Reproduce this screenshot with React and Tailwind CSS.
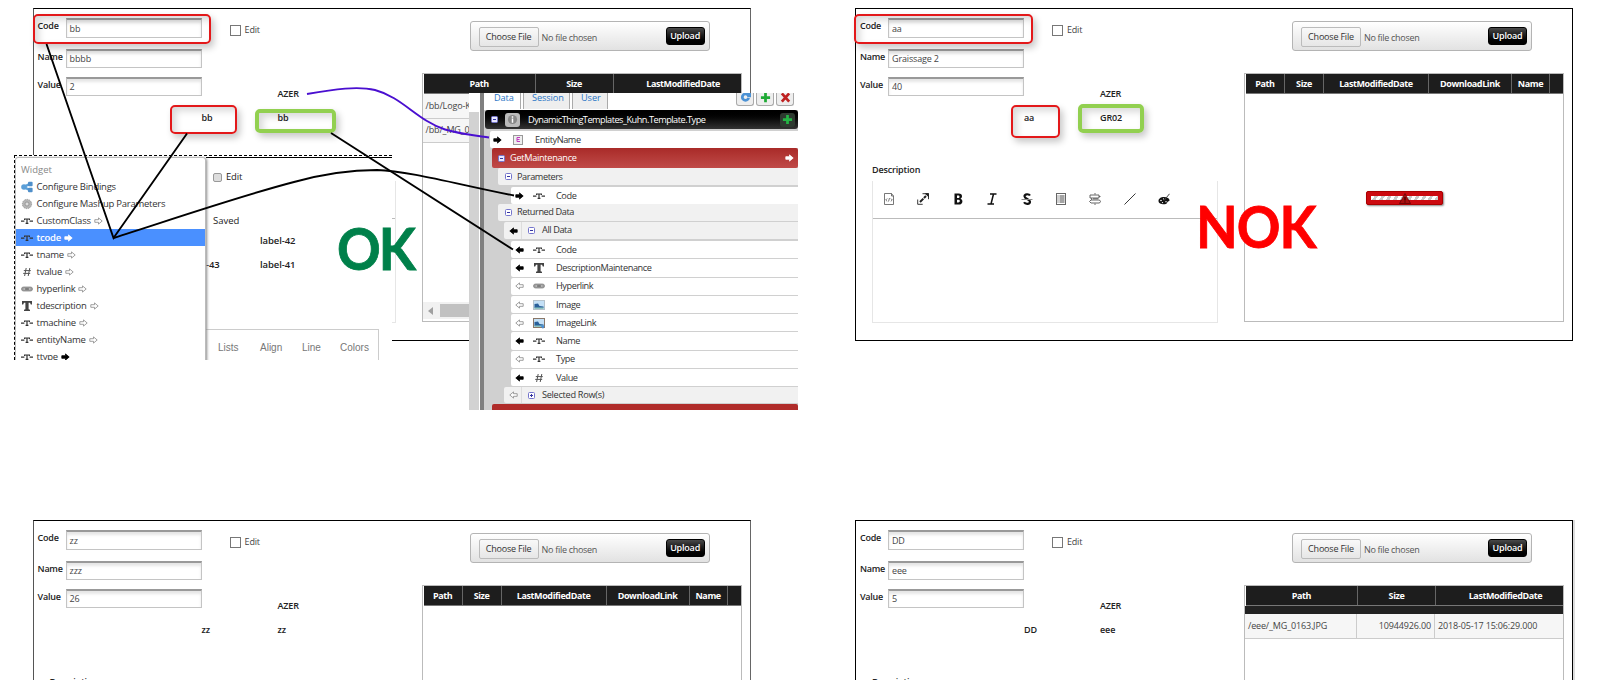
import React from 'react';

const panels = [
  {
    id: 'bb',
    code: 'bb', name: 'bbbb', value: '2', label1: 'bb', label2: 'bb',
    side: 'border-l-[#555] border-r-[#666]',
    columns: [
      { title: 'Path', width: 'w-[112px]' },
      { title: 'Size', width: 'w-[78px]' },
      { title: 'LastModifiedDate', width: 'w-[140px]' },
    ],
    rows: [['/bb/Logo-K'], ['/bb/_MG_0']],
    scrollbar: true,
  },
  {
    id: 'aa',
    code: 'aa', name: 'Graissage 2', value: '40', label1: 'aa', label2: 'GR02',
    side: 'border-l-black border-r-black',
    columns: [
      { title: 'Path', width: 'w-[39px]' },
      { title: 'Size', width: 'w-[39px]' },
      { title: 'LastModifiedDate', width: 'w-[105px]' },
      { title: 'DownloadLink', width: 'w-[83px]' },
      { title: 'Name', width: 'w-[38px]' },
    ],
    rows: [],
    loading: true,
  },
  {
    id: 'zz',
    code: 'zz', name: 'zzz', value: '26', label1: 'zz', label2: 'zz',
    side: 'border-l-[#555] border-r-[#666]',
    columns: [
      { title: 'Path', width: 'w-[39px]' },
      { title: 'Size', width: 'w-[39px]' },
      { title: 'LastModifiedDate', width: 'w-[105px]' },
      { title: 'DownloadLink', width: 'w-[83px]' },
      { title: 'Name', width: 'w-[38px]' },
    ],
    rows: [],
  },
  {
    id: 'DD',
    code: 'DD', name: 'eee', value: '5', label1: 'DD', label2: 'eee',
    side: 'border-l-black border-r-black shadow-[2px_0_0_#dcdcdc]',
    columns: [
      { title: 'Path', width: 'w-[112px]' },
      { title: 'Size', width: 'w-[78px]' },
      { title: 'LastModifiedDate', width: 'w-[140px]' },
    ],
    rows: [['/eee/_MG_0163.JPG', '10944926.00', '2018-05-17 15:06:29.000']],
    band: true,
  },
];

const menuItems = [
  { icon: 'share', text: 'Configure Bindings' },
  { icon: 'gear', text: 'Configure Mashup Parameters' },
  { icon: 'string', text: 'CustomClass', arrow: 'hollow' },
  { icon: 'string', text: 'tcode', arrow: 'white', selected: true },
  { icon: 'string', text: 'tname', arrow: 'hollow' },
  { icon: 'number', text: 'tvalue', arrow: 'hollow' },
  { icon: 'link', text: 'hyperlink', arrow: 'hollow' },
  { icon: 'text', text: 'tdescription', arrow: 'hollow' },
  { icon: 'string', text: 'tmachine', arrow: 'hollow' },
  { icon: 'string', text: 'entityName', arrow: 'hollow' },
  { icon: 'string', text: 'ttype', arrow: 'solid' },
];

const returnedFields = [
  { icon: 'string', text: 'Code', arrow: 'solid' },
  { icon: 'text', text: 'DescriptionMaintenance', arrow: 'solid' },
  { icon: 'link', text: 'Hyperlink', arrow: 'hollow' },
  { icon: 'image', text: 'Image', arrow: 'hollow' },
  { icon: 'imagelink', text: 'ImageLink', arrow: 'hollow' },
  { icon: 'string', text: 'Name', arrow: 'solid' },
  { icon: 'string', text: 'Type', arrow: 'hollow' },
  { icon: 'number', text: 'Value', arrow: 'solid' },
];

const Arrow = ({ kind, left }) => {
  const fill = { solid: '#000', white: '#fff', hollow: '#fff' }[kind];
  const stroke = kind === 'hollow' ? '#888' : fill;
  return (
    <svg viewBox="0 0 9 8" className={left ? 'w-[9px] h-[8px] shrink-0 -scale-x-100' : 'w-[9px] h-[8px] shrink-0'}>
      <path d="M.8 2.7h3.7V.9L8.2 4 4.5 7.1V5.3H.8z" fill={fill} stroke={stroke} strokeWidth=".8" />
    </svg>
  );
};

const TypeIcon = ({ name }) => (
  <svg viewBox="0 0 12 12" className="w-[12px] h-[12px] shrink-0" fill="none" stroke="#333">
    {name === 'string' && (
      <>
        <path d="M0 6.2h3.4M8.6 6.2H12" strokeWidth="1.2" />
        <path d="M3.6 5V4h4.8v1M6 4v4.4M4.6 8.4h2.8" strokeWidth="1.2" />
      </>
    )}
    {name === 'number' && <path d="M5.2 2 3.6 10M8.8 2 7.2 10M2.8 4.6h7M2.2 7.4h7" stroke="#555" />}
    {name === 'text' && <path d="M1 1h10v3.4H9.8L9 2.8H7.6v6.4l1.4.6V11H3V9.8l1.4-.6V2.8H3l-.8 1.6H1z" fill="#444" stroke="none" />}
    {name === 'link' && (
      <>
        <rect x=".5" y="4" width="11" height="4" rx="2" fill="#999" stroke="#8a8a8a" strokeWidth=".8" />
        <path d="M2.5 6h2M7.500 6h2" stroke="#ddd" strokeWidth=".8" />
        <path d="M4 6h4" stroke="#555" strokeWidth=".8" />
      </>
    )}
    {(name === 'image' || name === 'imagelink') && (
      <>
        <rect x=".5" y="1.5" width="11" height="9" fill="#c4e0f6" stroke={name === 'image' ? '#b4c2cc' : '#8a7768'} />
        <path d="M1.5 9V5l3.500-.5L6.500 7l4 .5V9z" fill="#28609a" stroke="none" />
        <path d="M1.5 8.5h9V10h-9z" fill="#8fc4c0" stroke="none" />
        {name === 'imagelink' && <path d="M7.500 8.5h4l-1.500 3.500z" fill="#4a90d9" stroke="none" />}
      </>
    )}
    {name === 'share' && (
      <>
        <path d="M2.5 6 9 2.8M2.5 6 9 9.2" stroke="#5b9fd8" strokeWidth="2.4" />
        <circle cx="3" cy="6" r="2.8" fill="#5b9fd8" stroke="none" />
        <rect x="7" y=".8" width="4.600" height="4.400" rx="1" fill="#4f8fca" stroke="none" />
        <rect x="7" y="6.8" width="4.600" height="4.400" rx="1" fill="#4f8fca" stroke="none" />
      </>
    )}
    {name === 'gear' && (
      <>
        <circle cx="6" cy="6" r="4.600" fill="#b5b5b5" stroke="#9a9a9a" strokeDasharray="1.500 .8" />
        <circle cx="6" cy="6" r="2" fill="#ddd" stroke="#888" strokeWidth=".7" />
      </>
    )}
  </svg>
);

const Toggle = ({ plus, light }) => (
  <svg viewBox="0 0 7 7" className="w-[7px] h-[7px] shrink-0">
    <rect x=".5" y=".5" width="6" height="6" rx="1" fill={light ? '#e8e8ff' : '#fff'} stroke="#7474cc" />
    <path d={plus ? 'M2 3.500h3M3.500 2v3' : 'M2 3.500h3'} stroke="#3434a0" />
  </svg>
);

const toolbarIcons = [
  <g key="html" stroke="#555" strokeWidth=".8"><path d="M1.500.5h7l2 2.500v8.500h-9zM8.500.5V3h2" /><path d="M4.200 5.500 2.700 7l1.500 1.300M7.800 5.500 9.300 7 7.800 8.300M6.500 5l-1 3.500" /></g>,
  <g key="full" stroke="#222"><path d="M3 9l6-6" strokeWidth="2" strokeDasharray="4.800 .8" /><path d="M5.500.700h6v5.500M.700 6.500v4.800h5" strokeWidth=".9" /><path d="M8.500.700h3v3z" fill="#222" /></g>,
  <path key="bold" fillRule="evenodd" d="M2.500.500h4.200c2.200 0 3.300 1 3.300 2.800 0 1.200-.6 2-1.500 2.400 1.200.4 1.900 1.300 1.900 2.700 0 2-1.400 3.100-3.700 3.100H2.500zM5 2.500V5h1.200c.9 0 1.300-.4 1.300-1.200 0-.9-.4-1.300-1.300-1.300zM5 6.800v2.700h1.300c1 0 1.500-.5 1.500-1.400s-.5-1.300-1.500-1.300z" fill="#111" />,
  <path key="italic" d="M4 1h6.500M1.500 11H8M7.500 1 5 11" stroke="#111" strokeWidth="1.500" />,
  <g key="strike" stroke="#111"><path d="M9 2.500C8 .8 3.500.7 3.500 3.300S9 6 9 8.700s-4.600 2.800-6 .5" strokeWidth="2.200" /><path d="M.500 6.500h11" stroke="#888" /></g>,
  <g key="lists" stroke="#333"><rect x="1.500" y=".500" width="9" height="11" stroke="#666" /><path d="M4.500 3h5M4.500 5h5M4.500 7h5M4.500 9h5M2.500 3h1M2.500 5h1M2.500 7h1M2.500 9h1" strokeWidth=".900" /></g>,
  <g key="align" stroke="#555" strokeWidth=".900"><path d="M6 0v1.500M6 10.500V12M1 2h9v3H1zM2.500 5.200v1.600M10 3.500h1.500M2 7h8.500l1 1.500-1 1.500H2L.500 8.500zM4 5.800h5" /></g>,
  <path key="line" d="M.500 11.500l11-11" stroke="#222" strokeWidth=".900" />,
  <g key="colors"><path d="M.500 8c0-2.500 2.500-4 5.500-4 3.300 0 5.500 1.500 5.500 3.300 0 1.400-1.500 1-2 1.700s-.500 2.300-3.500 2.300S.500 10.300.500 8z" fill="#111" /><path d="M6 7.500l5.500-6.700" stroke="#444" /><circle cx="3" cy="7.500" r=".800" fill="#fff" /><circle cx="5.500" cy="5.800" r=".600" fill="#fff" /><circle cx="4.500" cy="9.600" r=".700" fill="#fff" /><circle cx="8" cy="8.800" r=".700" fill="#fff" /></g>,
];

const Field = ({ label, value, className }) => (
  <div className={`flex ${className}`}>
    <span className="w-[28px] shrink-0 font-semibold tracking-[-0.25px] leading-[15px] whitespace-nowrap">{label}</span>
    <div className="w-[136px] border border-[#c4c4c4] border-t-2 border-t-[#999] pl-[3px] flex items-center text-[#444] tracking-[-0.15px] shadow-[inset_0_3px_3px_#e6e6e6]">
      {value}
    </div>
  </div>
);

const UploadBar = () => (
  <div className="ml-[48px] mt-[12px] w-[240px] h-[30px] rounded-[3px] border border-[#b4b4b4] bg-linear-to-b from-white to-[#e2e2e2] flex pl-[8px] pr-[4px] pt-[5px]">
    <div className="w-[60px] h-[20px] rounded-[2px] border border-[#bbb] flex items-center justify-center text-[#333] tracking-[-0.2px] whitespace-nowrap">Choose File</div>
    <div className="ml-[3px] h-[21px] flex items-center text-[#555] tracking-[-0.3px] whitespace-nowrap">No file chosen</div>
    <div className="ml-auto w-[39px] h-[18px] rounded-[3px] border border-black bg-linear-to-b from-[#4a4a4a] to-black flex items-center justify-center text-white font-semibold tracking-[-0.2px]">Upload</div>
  </div>
);

const FileTable = ({ panel }) => (
  <div className="mt-[22px] w-[320px] h-[249px] border border-[#bbb] flex flex-col overflow-hidden">
    <div className="ml-px h-[20px] shrink-0 bg-[#1d1d1d] flex border-b border-[#777]">
      {panel.columns.map((col) => (
        <div key={col.title} className={`${col.width} shrink-0 border-r border-[#666] flex items-center justify-center text-white font-bold tracking-[-0.4px]`}>
          {col.title}
        </div>
      ))}
    </div>
    {panel.band && <div className="h-[8px] shrink-0 bg-[#222]" />}
    {panel.rows.map((row) => (
      <div key={row[0]} className="h-[24.500px] shrink-0 flex bg-[#f6f6f6] border-b border-[#ccc] text-[#444]">
        {panel.columns.map((col, i) => (
          <div key={col.title} className={`${col.width} shrink-0 border-r border-[#ccc] px-[3px] flex items-center whitespace-nowrap tracking-[-0.150px] ${i === 1 ? 'justify-end' : ''}`}>
            {row[i]}
          </div>
        ))}
      </div>
    ))}
    {panel.loading && (
      <div className="mt-[97px] ml-[121px] relative w-[77px] h-[14px] rounded-[2px] bg-[#cc0a10] border border-[#a00] shadow-[1px_1px_2px_#888] p-[4px]">
        <div className="h-[4px] bg-[repeating-linear-gradient(120deg,#fff_0_3px,#c9c9c9_3px_6px)]" />
        <svg viewBox="0 0 12 11" className="absolute left-[32px] top-[1px] w-[12px] h-[11px]">
          <path d="M6 .500 11.500 10.500H.500z" fill="#a80e0e" stroke="#400" strokeWidth=".600" />
          <path d="M6 4v3.500M6 8.500v1" stroke="#300" strokeWidth="1.200" />
        </svg>
      </div>
    )}
    {panel.scrollbar && (
      <div className="mt-auto mb-[2px] h-[17px] bg-[#f1f1f1] flex items-center">
        <svg viewBox="0 0 5 8" className="w-[5px] h-[8px] ml-[5px]"><path d="M5 0v8L0 4z" fill="#a0a0a0" /></svg>
        <div className="ml-[7px] w-[200px] h-[13px] bg-[#c1c1c1]" />
      </div>
    )}
  </div>
);

const MashupPanel = ({ panel }) => (
  <div className={`w-[718px] h-[333px] border border-y-black bg-white flex ${panel.side}`}>
    <div className="w-[388px] shrink-0 flex flex-col">
      <div className="flex h-[94px] pl-[4px]">
        <div className="w-[164px] pt-[9px]">
          <Field label="Code" value={panel.code} className="h-[20px]" />
          <Field label="Name" value={panel.name} className="h-[19px] mt-[11px]" />
          <Field label="Value" value={panel.value} className="h-[19px] mt-[9px]" />
        </div>
        <div className="pl-[28px] pt-[15px]">
          <div className="flex items-center h-[12px]">
            <span className="w-[11px] h-[11px] border border-[#777]" />
            <span className="ml-[4px] text-[#444] tracking-[-0.2px]">Edit</span>
          </div>
          <div className="ml-[48px] mt-[51px] h-[14px] leading-[14px] font-semibold tracking-[-0.2px]">AZER</div>
        </div>
      </div>
      <div className="flex mt-[8px] pl-[168px] h-[14px] leading-[14px] font-semibold tracking-[-0.1px]">
        <span className="w-[76px]">{panel.label1}</span>
        <span>{panel.label2}</span>
      </div>
      <div className="mt-[38px] pl-[16px] h-[14px] leading-[14px] font-semibold tracking-[-0.15px]">Description</div>
      <div className="mt-[4px] ml-[16px] w-[346px] h-[142px] border border-[#e6e6e6] border-t-0">
        <div className="h-[38px] border-b border-[#bbb] flex items-center pb-[2px] pl-[10px] gap-[22.400px]">
          {toolbarIcons.map((icon) => (
            <svg key={icon.key} viewBox="0 0 12 12" fill="none" className="w-[12px] h-[12px] shrink-0">{icon}</svg>
          ))}
        </div>
      </div>
    </div>
    <div>
      <UploadBar />
      <FileTable panel={panel} />
    </div>
  </div>
);

// Mashup builder with the widget menu opened over it
const WidgetMenu = () => (
  <div className="absolute left-[14px] top-[155px] w-[378px] h-[205px] overflow-hidden isolate bg-white border-t border-l border-dashed border-black flex text-[9.500px]">
    <div className="relative z-10 w-[191px] shrink-0 h-[220px] mt-px rounded-[3px] bg-white border border-[#bbb] shadow-[1px_1px_3px_#888] tracking-[-0.250px]">
      <div className="h-[17px] mt-[3px] pl-[5px] leading-[17px] text-[#888] tracking-normal">Widget</div>
      {menuItems.map((item) => (
        <div key={item.text} className={`h-[17.100px] flex items-center pl-[5px] ${item.selected ? 'bg-[#4a90ff] text-white font-semibold' : 'text-[#333]'}`}>
          <TypeIcon name={item.icon} />
          <span className="ml-[3.500px] mr-[3px] whitespace-nowrap">{item.text}</span>
          {item.arrow && <Arrow kind={item.arrow} />}
        </div>
      ))}
    </div>
    <div className="flex-1 mt-px border-t border-black flex flex-col text-[#222]">
      <div className="mt-[13px] h-[12px] pl-[7px] flex items-center">
        <span className="w-[9px] h-[9px] rounded-[2px] border border-[#999] bg-[#ddd]" />
        <span className="ml-[4px] tracking-[-0.2px]">Edit</span>
      </div>
      <div className="mt-[31px] h-[14px] pl-[7px] leading-[14px]">Saved</div>
      <div className="mt-[6px] h-[14px] pl-[54px] leading-[14px] font-semibold tracking-[-0.1px]">label-42</div>
      <div className="mt-[10px] h-[14px] leading-[14px] flex font-semibold tracking-[-0.1px]"><span className="w-[54px]">-43</span>label-41</div>
      <div className="mt-[57px] w-[173px] h-[40px] border-t border-r border-[#ccc] flex pl-[12px] pt-[11px] text-[10px] leading-[14px] text-[#777] font-['Liberation_Sans',sans-serif]">
        <span className="w-[42px]">Lists</span>
        <span className="w-[42px]">Align</span>
        <span className="w-[38px]">Line</span>
        <span>Colors</span>
      </div>
    </div>
  </div>
);

const FieldRow = ({ item, right, className }) => (
  <div className={`ml-[27px] bg-white rounded-l-[2px] flex items-center pl-[4px] ${className}`}>
    <Arrow kind={item.arrow} left={!right} />
    <span className="w-[9px]" />
    <TypeIcon name={item.icon} />
    <span className="ml-[11px]">{item.text}</span>
  </div>
);

const DataInspector = () => (
  <div className="absolute left-[469px] top-[93px] w-[329px] h-[317px] overflow-hidden bg-white flex text-[9.200px] tracking-[-0.420px] text-[#333]">
    <div className="w-[10px] shrink-0 mt-[19px] bg-[#d2d2d2]" />
    <div className="w-[4px] shrink-0 ml-px bg-[#808080]" />
    <div className="flex-1 flex flex-col">
      <div className="h-[17px] shrink-0 flex">
        <div className="flex gap-[2px] text-[#2a76c6] leading-[10px] h-[16px] tracking-[-0.1px]">
          <span className="w-[37px] pl-[10px] border-r border-[#aaa]">Data</span>
          <span className="w-[47px] pl-[8px] border-x border-[#aaa] bg-[#eee]">Session</span>
          <span className="w-[36px] pl-[8px] border-x border-[#aaa] bg-[#eee]">User</span>
        </div>
        <div className="ml-auto mr-[4px] flex gap-[2px] h-[13px]">
          <span className="w-[18px] rounded-b-[3px] border border-t-0 border-[#aaa] bg-[#eee] flex justify-center">
            <svg viewBox="0 0 12 12" className="w-[11px] h-[11px]"><circle cx="6" cy="4.500" r="3.500" fill="none" stroke="#4c92d4" strokeWidth="3" /><path d="M6 4.500 12 0v6z" fill="#eee" /><path d="M7 0h5v4.500H8z" fill="#4c92d4" /></svg>
          </span>
          <span className="w-[18px] rounded-b-[3px] border border-t-0 border-[#aaa] bg-[#eee] flex justify-center">
            <svg viewBox="0 0 12 12" className="w-[11px] h-[11px]"><path d="M6 0v10M1 5h10" stroke="#1faa35" strokeWidth="3" /></svg>
          </span>
          <span className="w-[18px] rounded-b-[3px] border border-t-0 border-[#aaa] bg-[#eee] flex justify-center">
            <svg viewBox="0 0 12 12" className="w-[11px] h-[11px]"><path d="M2 .500l8 9M10 .500l-8 9" stroke="#bf2222" strokeWidth="3" /></svg>
          </span>
        </div>
      </div>
      <div className="flex-1 bg-[#d0d0d0] flex flex-col">
        <div className="h-[19px] ml-px shrink-0 bg-linear-to-b from-black to-[#333] rounded-[3px] flex items-center pl-[6px] pr-[3px] text-white">
          <Toggle light />
          <span className="ml-[7px] w-[15px] h-[14px] rounded-[3px] bg-[#bbb] flex items-center justify-center">
            <svg viewBox="0 0 12 12" className="w-[11px] h-[11px]"><circle cx="6" cy="6" r="5" fill="#888" /><path d="M6 2.500v1.500M6 5v4.500" stroke="#fff" strokeWidth="1.600" /></svg>
          </span>
          <span className="ml-[8px] whitespace-nowrap tracking-[-0.5px]">DynamicThingTemplates_Kuhn.Template.Type</span>
          <span className="ml-auto w-[15px] h-[14px] rounded-[3px] bg-[#2e3a30] flex items-center justify-center">
            <svg viewBox="0 0 12 12" className="w-[11px] h-[11px]"><path d="M6 1v10M1 6h10" stroke="#25b545" strokeWidth="3" /></svg>
          </span>
        </div>
        <div className="mt-[2px] ml-[6px] h-[17px] shrink-0 rounded-l-[2px] bg-white flex items-center pl-[3px]">
          <Arrow kind="solid" />
          <span className="ml-[11px] w-[10px] h-[10px] border border-[#999] bg-[#eee] flex items-center justify-center">
            <svg viewBox="0 0 5 5" className="w-[5px] h-[5px]"><path d="M4 .500H1v4h3M1 2.500h2.500" fill="none" stroke="#c03ac0" /></svg>
          </span>
          <span className="ml-[12px]">EntityName</span>
        </div>
        <div className="ml-[8px] h-[20px] shrink-0 rounded-[2px] bg-linear-to-b from-[#a92a28] to-[#c04a48] flex items-center pl-[6px] pr-[4px] text-white">
          <Toggle light />
          <span className="ml-[5px] tracking-[-0.3px]">GetMaintenance</span>
          <span className="ml-auto flex"><Arrow kind="white" /></span>
        </div>
        <div className="ml-[14px] h-[17px] shrink-0 rounded-l-[2px] bg-[#f1f1f1] flex items-center pl-[7px]">
          <Toggle />
          <span className="ml-[5px]">Parameters</span>
        </div>
        <FieldRow item={{ icon: 'string', text: 'Code', arrow: 'solid' }} right className="mt-[2px] h-[17px] shrink-0" />
        <div className="ml-[14px] h-[17px] shrink-0 rounded-l-[2px] bg-[#f1f1f1] flex items-center pl-[7px]">
          <Toggle />
          <span className="ml-[5px] pb-px">Returned Data</span>
        </div>
        <div className="mt-px mb-px ml-[20px] h-[17px] shrink-0 rounded-l-[2px] bg-[#f1f1f1] flex items-center pl-[5px]">
          <Arrow kind="solid" left />
          <span className="ml-[3px] mr-[6px] h-full border-l border-[#ddd]" />
          <Toggle />
          <span className="ml-[7px] pb-px">All Data</span>
        </div>
        {returnedFields.map((item) => (
          <FieldRow key={item.text} item={item} className="mt-px h-[17.300px] shrink-0" />
        ))}
        <div className="ml-[20px] mt-px h-[16px] shrink-0 rounded-l-[2px] bg-[#f1f1f1] flex items-center pl-[5px]">
          <Arrow kind="hollow" left />
          <span className="ml-[3px] mr-[6px] h-full border-l border-[#ddd]" />
          <Toggle plus />
          <span className="ml-[7px] tracking-[-0.3px]">Selected Row(s)</span>
        </div>
        <div className="ml-[8px] mt-px h-[10px] shrink-0 rounded-[2px] bg-[#b02c2a]" />
      </div>
    </div>
  </div>
);

const Highlight = ({ className }) => (
  <div className={`absolute rounded-[5px] shadow-[3px_4px_7px_rgba(0,0,0,0.22),inset_4px_4px_7px_rgba(0,0,0,0.15)] ${className}`} />
);

const Annotations = () => (
  <>
    <Highlight className="left-[33px] top-[14px] w-[178px] h-[30px] border-2 border-[#e3181a]" />
    <Highlight className="left-[170px] top-[105px] w-[67px] h-[29px] border-2 border-[#e3181a]" />
    <Highlight className="left-[255px] top-[109px] w-[81px] h-[24px] border-4 border-[#92d050]" />
    <Highlight className="left-[854px] top-[14px] w-[179px] h-[30px] border-2 border-[#e3181a]" />
    <Highlight className="left-[1011px] top-[105px] w-[49px] h-[33px] border-2 border-[#e3181a]" />
    <Highlight className="left-[1078px] top-[104px] w-[66px] h-[29px] border-4 border-[#92d050]" />
    <div className="absolute left-[337px] top-[212px] text-[57px] leading-[72px] font-bold text-[#00804a] font-['Lato',sans-serif] tracking-[-2px] origin-left scale-x-95 [-webkit-text-stroke:0.8px_#00804a]">OK</div>
    <div className="absolute left-[1196px] top-[190px] text-[57px] leading-[72px] font-bold text-[#ff0000] font-['Lato',sans-serif] tracking-[-1px] origin-left scale-x-95 [-webkit-text-stroke:0.8px_#ff0000]">NOK</div>
    <svg viewBox="0 0 820 420" className="absolute left-0 top-0 w-[820px] h-[420px]" fill="none" stroke="#000" strokeWidth="1.900">
      <path d="M46.500 44 113.500 238 187 133.500" />
      <path d="M113.500 238C170 220 240 196 294 182C330 172 355 170 377 170C410 171 460 185 514 195.500" />
      <path d="M331 133 513 249.500" />
      <path d="M307 94C335 89 358 86 375 90C402 97 418 121 445 129.500C460 134 475 135.500 489 137.500" stroke="#4a0fd0" />
    </svg>
  </>
);

const App = () => {
  return (
    <div className="relative w-[1607px] h-[680px] overflow-hidden bg-white text-[9px] leading-[12px] text-[#222] font-['Open_Sans','Noto_Sans',sans-serif]">
      <div className="grid grid-cols-[718px_718px] gap-x-[104.400px] gap-y-[179px] pl-[32.600px] pt-[8px]">
        {panels.map((panel) => (
          <MashupPanel key={panel.id} panel={panel} />
        ))}
      </div>
      <WidgetMenu />
      <DataInspector />
      <Annotations />
    </div>
  );
};

export default App;
